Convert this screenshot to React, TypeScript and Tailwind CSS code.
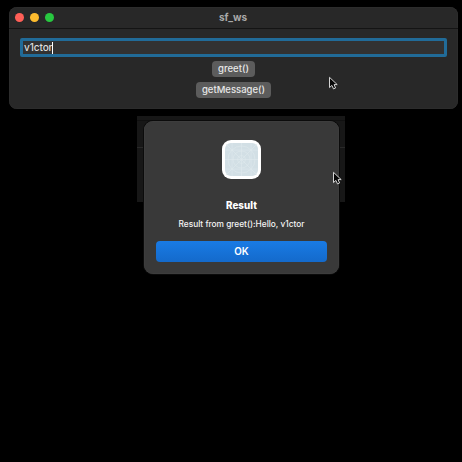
function Cursor({ className }: { className: string }) {
  return (
    <svg className={className} width="11" height="15" viewBox="0 0 11 15">
      <path
        d="M1.5 1.3V11.6L3.9 9.4L5.5 12.9L7.6 12L6.1 8.6H9.2Z"
        fill="#080808"
        stroke="#d4d4d4"
        strokeWidth="1"
        strokeLinejoin="round"
      />
    </svg>
  );
}

function AppIcon() {
  return (
    <svg className="h-[39px] w-[39px]" viewBox="0 0 39 39">
      <rect width="39" height="39" rx="9" fill="#fff" />
      <rect x="3" y="3" width="33" height="33" rx="6" fill="#d2dfe5" />
      <g fill="none" stroke="#dfe9ed" strokeWidth="0.6">
        <path d="M4 4L35 35M35 4L4 35M19.5 3V36M3 19.5H36M10 3V36M29 3V36M3 10H36M3 29H36" />
        <circle cx="19.5" cy="19.5" r="13.5" />
        <circle cx="19.5" cy="19.5" r="8.5" />
        <circle cx="19.5" cy="19.5" r="4" />
      </g>
    </svg>
  );
}

function MainWindow() {
  return (
    <div className="flex h-[102px] w-[449px] flex-col overflow-hidden rounded-[8px] bg-[#282828] shadow-[inset_0_0_0_0.5px_#303030]">
      <div className="flex h-[22px] shrink-0 items-center border-b border-[#141414] pl-[6px]">
        <div className="flex w-[60px] gap-[6px] pb-px">
          <span className="h-[9px] w-[9px] rounded-full bg-[#ff5f57]" />
          <span className="h-[9px] w-[9px] rounded-full bg-[#febc2e]" />
          <span className="h-[9px] w-[9px] rounded-full bg-[#28c840]" />
        </div>
        <div className="flex-1 pr-[67px] pb-[2px] text-center text-[10px] leading-none font-bold tracking-[-0.05px] text-[#a9a9a9]">
          sf_ws
        </div>
      </div>
      <div className="flex flex-col items-center pt-[9px]">
        <div className="flex h-[19px] w-[427px] items-center rounded-[2px] border-[3px] border-[#216b98] bg-[#323232] pl-[1px] text-[10px] leading-none font-medium text-[#dedede]">
          <span className="w-[28px] pb-px tracking-[-0.08px]">v1ctor</span>
          <span className="h-[12px] w-px bg-white" />
        </div>
        <button className="mt-[4px] h-[16px] w-[43px] rounded-[4px] bg-[#5c5c5c] pb-px text-[9.5px] leading-none font-medium text-[#e8e8e8]">
          greet()
        </button>
        <button className="mt-[5px] h-[16px] w-[75px] rounded-[4px] bg-[#5c5c5c] pb-px text-[9.5px] leading-none font-medium text-[#e8e8e8]">
          getMessage()
        </button>
      </div>
    </div>
  );
}

function ResultDialog() {
  return (
    <div className="relative h-[86px] w-[208px] bg-[#171717]">
      <div className="h-[5px] border-b border-[#101010]" />
      <div className="h-[27px] border-b border-[#292929]" />
      <div className="absolute top-[5px] left-[7px] flex h-[152.5px] w-[195px] flex-col items-center rounded-[9px] bg-[#393939] px-[12px] pt-[19px] shadow-[0_0_0_1px_#0b0b0b,inset_0_0_0_0.5px_#424242]">
        <AppIcon />
        <h1 className="mt-[22px] text-[9.8px] leading-[10px] font-extrabold text-white">Result</h1>
        <p className="mt-[8px] text-[8.3px] leading-[10px] font-medium whitespace-nowrap text-[#f4f4f4]">
          Result from greet():Hello, v1ctor
        </p>
        <button className="mt-[11.5px] h-[21px] w-[171px] rounded-[4px] bg-linear-to-b from-[#197be5] to-[#146acb] pt-px text-[9.8px] leading-[10px] font-semibold text-white">
          OK
        </button>
      </div>
    </div>
  );
}

export default function App() {
  return (
    <main className="relative h-[462px] w-[462px] overflow-hidden bg-black pt-[7px] font-['Inter','Liberation_Sans',sans-serif]">
      <div className="pl-[9px]">
        <MainWindow />
      </div>
      <div className="pt-[7px] pl-[137px]">
        <ResultDialog />
      </div>
      <Cursor className="absolute top-[76px] left-[328px]" />
      <Cursor className="absolute top-[171px] left-[332px]" />
    </main>
  );
}
